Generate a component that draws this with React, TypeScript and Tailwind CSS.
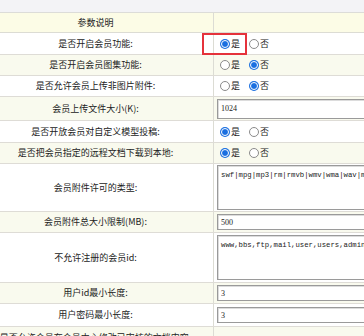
import React from "react";

const cjk = "font-['Noto_Sans_CJK_SC','Noto_Sans',sans-serif]";
const mono = "font-['Liberation_Mono','DejaVu_Sans_Mono',monospace]";
const serif = "font-['Liberation_Serif','DejaVu_Serif',serif]";

function Radio({ checked }: { checked?: boolean }) {
  return checked ? (
    <span className="flex h-[10px] w-[10px] shrink-0 items-center justify-center rounded-full bg-[#1a6fe0]">
      <span className="h-[8px] w-[8px] rounded-full border-[1.5px] border-white bg-[#1a6fe0]" />
    </span>
  ) : (
    <span className="block h-[10px] w-[10px] shrink-0 rounded-full border border-[#8a8a8a] bg-white" />
  );
}

function YesNo({ yes }: { yes: boolean }) {
  return (
    <div className="flex items-center pl-[6px] text-[9px] text-[#222]">
      <Radio checked={yes} />
      <span className="ml-[1px]">是</span>
      <span className="ml-[9px] flex">
        <Radio checked={!yes} />
      </span>
      <span className="ml-[1px]">否</span>
    </div>
  );
}

function TextInput({ value, tall }: { value: string; tall?: boolean }) {
  return (
    <input
      readOnly
      defaultValue={value}
      className={
        (tall ? "h-[20px] " : "h-[16px] ") +
        "ml-[3px] w-[170px] shrink-0 border border-[#9a9a9a] bg-white px-[3px] text-[8px] text-[#222] shadow-[inset_1px_1px_0_#dcdcdc] outline-none " +
        serif
      }
    />
  );
}

function Area({ value }: { value: string }) {
  return (
    <textarea
      readOnly
      defaultValue={value}
      className={
        "ml-[3px] h-[45px] w-[170px] shrink-0 resize-none overflow-hidden whitespace-nowrap border border-[#9a9a9a] bg-white px-[3px] pt-[4px] text-[7.3px] leading-[10px] text-[#222] shadow-[inset_1px_1px_0_#dcdcdc] outline-none " +
        mono
      }
    />
  );
}

type Row = { label: string; cls: string; field?: React.ReactNode };

const rows: Row[] = [
  { label: "是否开启会员功能:", cls: "h-[22px] bg-white", field: <YesNo yes /> },
  { label: "是否开启会员图集功能:", cls: "h-[21px] bg-[#f9faee]", field: <YesNo yes={false} /> },
  { label: "是否允许会员上传非图片附件:", cls: "h-[21px] bg-white", field: <YesNo yes={false} /> },
  { label: "会员上传文件大小(K):", cls: "h-[24px] bg-[#f9faee]", field: <TextInput value="1024" tall /> },
  { label: "是否开放会员对自定义模型投稿:", cls: "h-[22px] bg-white", field: <YesNo yes /> },
  { label: "是否把会员指定的远程文档下载到本地:", cls: "h-[21px] bg-[#f9faee]", field: <YesNo yes /> },
  {
    label: "会员附件许可的类型:",
    cls: "h-[48px] bg-white",
    field: <Area value="swf|mpg|mp3|rm|rmvb|wmv|wma|wav|mid|mov" />,
  },
  { label: "会员附件总大小限制(MB):", cls: "h-[21px] bg-[#f9faee]", field: <TextInput value="500" /> },
  {
    label: "不允许注册的会员id:",
    cls: "h-[50px] bg-white",
    field: <Area value="www,bbs,ftp,mail,user,users,admin,administrator" />,
  },
  { label: "用户id最小长度:", cls: "h-[21px] bg-[#f9faee]", field: <TextInput value="3" /> },
  { label: "用户密码最小长度:", cls: "h-[23px] bg-white", field: <TextInput value="3" /> },
  { label: "是否允许会员在会员中心修改已审核的文档内容:", cls: "h-[22px] bg-[#f9faee]" },
];

export default function App() {
  return (
    <div className={"relative h-[336px] w-[364px] overflow-hidden bg-white " + cjk}>
      <div className="h-[13px] border-b border-[#dcdcd8] bg-[#f3f3f6]" />

      <div className="flex h-[20px] border-b border-[#dcdcd4] bg-[#fcfce6]">
        <div className="flex w-[214px] shrink-0 items-center justify-center border-r border-[#dcdcd4] pr-[22px] text-[9px] text-[#222]">
          参数说明
        </div>
        <div className="flex-1" />
      </div>

      {rows.map((r) => (
        <div key={r.label} className={"flex border-b border-[#dedcd6] " + r.cls}>
          <div className="flex w-[214px] shrink-0 items-center justify-center whitespace-nowrap border-r border-[#dcdcd4] pr-[22px] text-[9px] text-[#222]">
            {r.label}
          </div>
          <div className="flex min-w-0 flex-1 items-center overflow-hidden">{r.field}</div>
        </div>
      ))}

      {/* red highlight box drawn over the first option */}
      <div className="absolute left-[202px] top-[33px] h-[22px] w-[45px] border-2 border-[#e5323b]" />
    </div>
  );
}
